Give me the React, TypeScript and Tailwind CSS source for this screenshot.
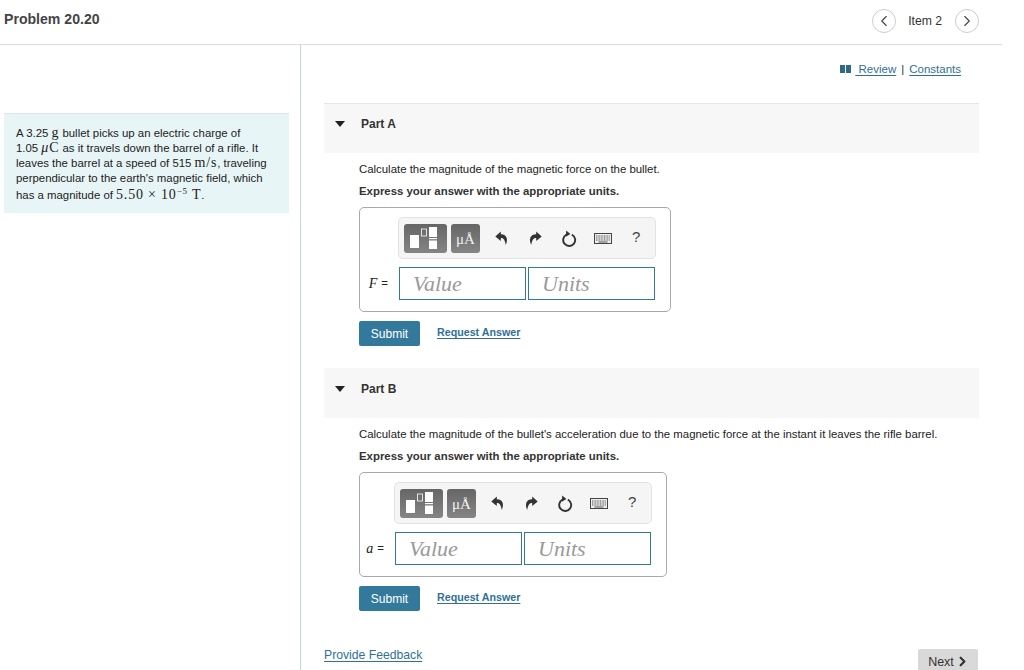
import { ChevronLeft, ChevronRight } from 'lucide-react'

const serif = 'font-["Liberation_Serif",serif]'
const math = 'font-["Liberation_Serif",serif] text-[14px] leading-none tracking-[0.8px]'

function TemplateIcon() {
  return (
    <svg width="43" height="29" viewBox="0 0 43 29" className="block">
      <rect x="6" y="11" width="9" height="13" fill="#fff" />
      <rect x="17.5" y="5" width="5" height="7" fill="none" stroke="#fff" strokeWidth="0.8" />
      <rect x="25" y="3" width="8" height="10" fill="#fff" />
      <rect x="25" y="14" width="8" height="1.2" fill="#fff" />
      <rect x="25" y="16.5" width="8" height="8.5" fill="#fff" />
    </svg>
  )
}

function ArrowIcon({ flip }: { flip?: boolean }) {
  return (
    <svg width="13" height="15" viewBox="0 0 13 15" className={flip ? '-scale-x-100' : ''}>
      <path d="M5.8 0.5 L0.3 5.6 L5.8 10 L5.8 6.9 C8.4 6.9 10 8.4 10.8 14 C13 9 12.6 3.6 5.8 3.3 Z" fill="#333" />
    </svg>
  )
}

function ResetIcon() {
  return (
    <svg width="16" height="17" viewBox="0 0 16 17" fill="none">
      <path d="M5.2 4.8 A6 6 0 1 0 10.8 4.6" stroke="#333" strokeWidth="1.9" />
      <path d="M5.2 0.6 L9.4 4 L4.8 6.8 Z" fill="#333" />
    </svg>
  )
}

function KeyboardIcon() {
  return (
    <svg width="18" height="11" viewBox="0 0 18 11" fill="none">
      <rect x="0.5" y="0.5" width="17" height="10" fill="#eee" stroke="#444" />
      <path d="M2 3h14M2 5h14M2 7h14" stroke="#555" strokeWidth="1" strokeDasharray="1 0.6" />
      <path d="M4.5 9h9" stroke="#555" strokeWidth="1" />
    </svg>
  )
}

function AnswerBox({ symbol, width, labelWidth }: { symbol: string; width: string; labelWidth: string }) {
  return (
    <div className={`${width} h-[105px] border border-[#aaa] rounded-[5px] pt-[9px]`}>
      <div className={`${labelWidth} flex flex-col`}>
        <div className="ml-auto w-[258px] h-[42px] bg-[#f5f5f5] border border-[#e2e2e2] rounded-[5px] flex items-center pl-[5px]">
          <div className="w-[43px] h-[29px] rounded-[3px] bg-gradient-to-b from-[#666] to-[#858585]">
            <TemplateIcon />
          </div>
          <div className={`ml-1 w-[29px] h-[29px] rounded-[3px] bg-gradient-to-b from-[#666] to-[#858585] text-[#f2f2f2] text-[15px] flex items-center justify-center pt-[2px] ${serif}`}>
            μÅ
          </div>
          <div className="ml-[15px] w-[13px] flex justify-center"><ArrowIcon /></div>
          <div className="ml-[21px] w-[13px] flex justify-center"><ArrowIcon flip /></div>
          <div className="ml-[19px] w-[16px] flex justify-center"><ResetIcon /></div>
          <div className="ml-[17px] w-[18px] flex justify-center"><KeyboardIcon /></div>
          <div className="ml-[20px] text-[#444] text-[15px] leading-none mb-1">?</div>
        </div>
        <div className="mt-2 flex items-center">
          <div className="flex-1 flex justify-end items-center pr-[11px] text-[11.5px] text-[#222]">
            <span className={`italic text-[14px] ${serif}`}>{symbol}</span>
            <span className="ml-1">=</span>
          </div>
          <div className="flex gap-[2px]">
            <div className={`w-[127px] h-[33px] border border-[#33799c] pl-[13px] flex items-center italic text-[22px] text-[#999] ${serif}`}>Value</div>
            <div className={`w-[127px] h-[33px] border border-[#33799c] pl-[13px] flex items-center italic text-[22px] text-[#999] ${serif}`}>Units</div>
          </div>
          <div className="w-px" />
        </div>
      </div>
    </div>
  )
}

function Part({ name, question, symbol, width, labelWidth, band }: { name: string; question: string; symbol: string; width: string; labelWidth: string; band: string }) {
  return (
    <section>
      <div className={`${band} bg-[#f7f7f7] flex items-start`}>
        <svg width="10" height="6" viewBox="0 0 10 6" className="ml-[11px] mt-[4px]">
          <path d="M0 0 H10 L5 6 Z" fill="#222" />
        </svg>
        <h2 className="ml-4 text-xs font-bold text-[#333] leading-[15px]">{name}</h2>
      </div>
      <div className="pl-[35px]">
        <p className="mt-[9px] text-[11.4px] leading-[15px] text-[#222]">{question}</p>
        <p className="mt-[7px] text-[11.4px] leading-[15px] font-bold text-[#333]">Express your answer with the appropriate units.</p>
        <div className="mt-[8px]">
          <AnswerBox symbol={symbol} width={width} labelWidth={labelWidth} />
        </div>
        <div className="mt-[9px] flex items-center">
          <button className="w-[61px] h-[25px] bg-[#33799c] rounded-[2px] text-white text-xs">Submit</button>
          <a className="ml-[17px] mb-[2px] text-[10.7px] font-bold text-[#2f7195] underline underline-offset-2">Request Answer</a>
        </div>
      </div>
    </section>
  )
}

export default function App() {
  return (
    <div className="w-[1024px] h-[670px] overflow-hidden bg-white font-['Liberation_Sans',sans-serif]">
      {/* Header */}
      <header className="w-[1002px] h-[45px] border-b border-[#ddd] flex items-center justify-between pl-1 pr-[23px]">
        <h1 className="mb-[4px] text-[14.1px] font-bold text-[#444]">Problem 20.20</h1>
        <div className="flex items-center mb-[3px]">
          <button className="w-6 h-6 rounded-full border border-[#ccc] flex items-center justify-center text-[#444]">
            <ChevronLeft size={18} strokeWidth={1.5} />
          </button>
          <span className="ml-[12px] mr-[13px] mt-[2px] text-[12.2px] text-[#333]">Item 2</span>
          <button className="w-6 h-6 rounded-full border border-[#ccc] flex items-center justify-center text-[#444]">
            <ChevronRight size={18} strokeWidth={1.5} />
          </button>
        </div>
      </header>

      <div className="flex h-[625px]">
        {/* Left problem text */}
        <aside className="w-[301px] shrink-0 border-r border-[#c5d3e3] pl-1 pr-[11px] pt-[68px]">
          <div className="h-[100px] bg-[#e8f5f6] border-t border-[#dde5e8] pl-3 pr-2 pt-[12px] text-[11.4px] leading-[15px] text-[#222]">
            <p>A 3.25 <span className={math}>g</span> bullet picks up an electric charge of</p>
            <p>1.05 <span className={math}><i>μ</i>C</span> as it travels down the barrel of a rifle. It</p>
            <p>leaves the barrel at a speed of 515 <span className={math}>m/s</span>, traveling</p>
            <p>perpendicular to the earth's magnetic field, which</p>
            <p className="mt-[2px]">has a magnitude of <span className={math}>5.50 × 10<sup className="text-[9px] leading-none top-[-5px]">−5</sup> T</span>.</p>
          </div>
        </aside>

        {/* Parts */}
        <main className="w-[655px] ml-[23px]">
          <div className="h-[58px] flex items-start justify-end pt-[17px] pr-[18px] text-[11.5px] leading-[14px]">
            <svg width="11" height="8" viewBox="0 0 11 8" className="mt-[3px] mr-[4px]">
              <path d="M0 0 H5 V8 H0 Z M6 0 H11 V8 H6 Z" fill="#2d6a8a" />
            </svg>
            <a className="text-[#2f7195] underline underline-offset-2">&nbsp;Review</a>
            <span className="mx-[5px] text-[#333]">|</span>
            <a className="text-[#2f7195] underline underline-offset-2">Constants</a>
          </div>
          <div className="border-t border-[#e6e6e6]">
            <Part band="h-[49px] pt-[13px]" name="Part A" question="Calculate the magnitude of the magnetic force on the bullet." symbol="F" width="w-[312px]" labelWidth="w-[296px]" />
            <div className="h-[22px]" />
            <Part band="h-[50px] pt-[14px]" name="Part B" question="Calculate the magnitude of the bullet's acceleration due to the magnetic force at the instant it leaves the rifle barrel." symbol="a" width="w-[308px]" labelWidth="w-[292px]" />
          </div>
          <div className="mt-[38px] flex items-start justify-between">
            <a className="text-[12.2px] leading-[12px] text-[#2f7195] underline underline-offset-2">Provide Feedback</a>
            <button className="w-[60px] h-[30px] mr-px bg-[#d9d9d9] rounded-[2px] text-[12.5px] text-[#333] flex items-start justify-center pt-1 pl-[2px]">
              Next
              <ChevronRight size={15} strokeWidth={3.5} className="ml-px mt-px" />
            </button>
          </div>
        </main>
      </div>
    </div>
  )
}
